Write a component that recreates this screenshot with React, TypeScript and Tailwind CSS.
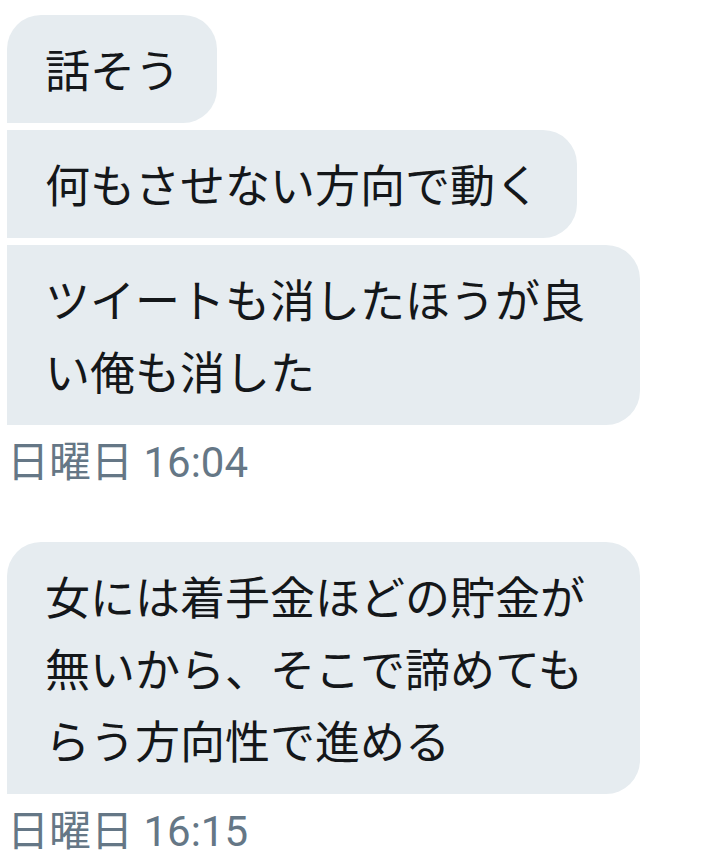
// Direct-message thread: grey received bubbles with timestamps

const font = { fontFamily: '"Noto Sans CJK JP", Roboto, sans-serif' };

type Bubble = { text: string; shape: string };

const groups: { bubbles: Bubble[]; time: string }[] = [
  {
    bubbles: [
      { text: '話そう', shape: 'rounded-tl-[34px] rounded-r-[34px]' },
      { text: '何もさせない方向で動く', shape: 'rounded-r-[34px]' },
      { text: 'ツイートも消したほうが良い俺も消した', shape: 'rounded-r-[34px]' },
    ],
    time: '日曜日 16:04',
  },
  {
    bubbles: [
      {
        text: '女には着手金ほどの貯金が無いから、そこで諦めてもらう方向性で進める',
        shape: 'rounded-tl-[34px] rounded-r-[34px]',
      },
    ],
    time: '日曜日 16:15',
  },
];

export default function App() {
  return (
    <main className="min-h-screen w-[715px] bg-white pl-[7px] pt-[15px]" style={font}>
      {groups.map((g, gi) => (
        <section key={gi} className={gi > 0 ? 'mt-[55px]' : ''}>
          <div className="flex flex-col items-start gap-[7px]">
            {g.bubbles.map((b, i) => (
              <div
                key={i}
                className={`max-w-[633px] bg-[#e6ecf0] pl-[38px] pr-[37px] py-[18px] text-[45px] leading-[72px] text-[#14171a] ${b.shape}`}
              >
                {b.text}
              </div>
            ))}
          </div>
          <p
            className="mt-[14px] text-[42px] leading-[48px] text-[#657786]"
            style={{ fontFamily: 'Roboto, "Noto Sans CJK JP", sans-serif' }}
          >
            {g.time}
          </p>
        </section>
      ))}
    </main>
  );
}
